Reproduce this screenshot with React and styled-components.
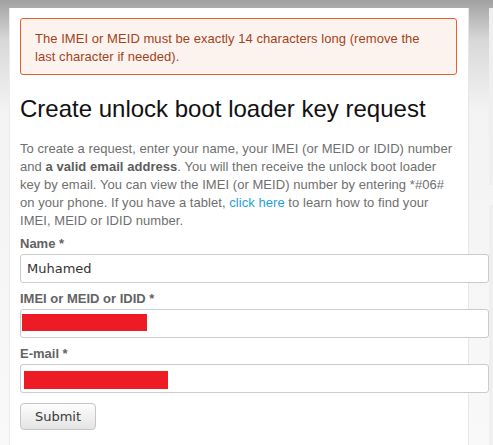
import styled, { createGlobalStyle } from 'styled-components'

const GlobalStyle = createGlobalStyle`
    html, body {
        margin: 0;
        padding: 0;
    }
    body {
        background: linear-gradient(#a1a1a1 0, #d8d8d8 40px, #f3f3f3 110px, #f9f9f9 100%);
        min-height: 445px;
        overflow: hidden;
        font-family: "Liberation Sans", Arial, sans-serif;
    }
`

function App() {
    return (
        <>
            <GlobalStyle />
            <Page>
                <Main>
                    <Alert>
                        The IMEI or MEID must be exactly 14 characters long (remove the
                        <br />
                        last character if needed).
                    </Alert>
                    <Title>Create unlock boot loader key request</Title>
                    <Intro>
                        To create a request, enter your name, your IMEI (or MEID or IDID) number
                        <br />
                        and <b>a valid email address</b>. You will then receive the unlock boot loader
                        <br />
                        key by email. You can view the IMEI (or MEID) number by entering *#06#
                        <br />
                        on your phone. If you have a tablet, <IntroLink href="#">click here</IntroLink> to
                        learn how to find your
                        <br />
                        IMEI, MEID or IDID number.
                    </Intro>
                    <Form onSubmit={(e) => e.preventDefault()}>
                        <Field>
                            <Label>Name *</Label>
                            <Input defaultValue='Muhamed' />
                        </Field>
                        <Field>
                            <Label>IMEI or MEID or IDID *</Label>
                            <InputWrap>
                                <Input defaultValue='' />
                                <Redaction $top={5} $left={2} $width={125} $height={17} />
                            </InputWrap>
                        </Field>
                        <Field>
                            <Label>E-mail *</Label>
                            <InputWrap>
                                <Input defaultValue='' />
                                <Redaction $top={7} $left={4} $width={144} $height={18} />
                            </InputWrap>
                        </Field>
                        <SubmitButton type='submit'>Submit</SubmitButton>
                    </Form>
                </Main>
                <Sidebar>
                    <SideBox $height={177} />
                    <SideBox $height={260} />
                </Sidebar>
            </Page>
        </>
    )
}

const Page = styled.div`
    display: flex;
    align-items: flex-start;
    padding-top: 8px;
    padding-left: 9px;
    gap: 20px;
    width: 520px;
`

const Main = styled.main`
    position: relative;
    z-index: 1;
    box-sizing: border-box;
    width: 460px;
    flex: none;
    min-height: 440px;
    background: #fff;
    border-left: 1px solid #ececec;
    border-right: 1px solid #e6e6e6;
    padding: 10px 11px 20px 10px;
`

const Alert = styled.div`
    border: 1px solid #e6602e;
    border-radius: 3px;
    background: #fdf3ee;
    color: #a3431b;
    font-size: 13px;
    line-height: 18px;
    letter-spacing: 0.05px;
    padding: 11px 14px 8px;
    white-space: nowrap;
`

const Title = styled.h1`
    margin: 20px 0 0;
    font-size: 24px;
    line-height: 28px;
    font-weight: 400;
    color: #111;
`

const Intro = styled.p`
    margin: 17px 0 0;
    font-size: 13px;
    line-height: 18px;
    letter-spacing: 0.05px;
    color: #6f6f6f;
    white-space: nowrap;

    b {
        color: #5c5c5c;
    }
`

const IntroLink = styled.a`
    color: #1ea0e0;
    text-decoration: none;
`

const Form = styled.form`
    display: flex;
    flex-direction: column;
    align-items: flex-start;
    margin-top: 5px;
    gap: 7px;
`

const Field = styled.div`
    display: flex;
    flex-direction: column;
    gap: 0;
`

const Label = styled.label`
    font-size: 13px;
    line-height: 18px;
    font-weight: 700;
    color: #636363;
    margin-bottom: 1px;
`

const InputWrap = styled.div`
    position: relative;
`

const Input = styled.input`
    box-sizing: border-box;
    width: 469px;
    height: 29px;
    margin: 0;
    border: 1px solid #cbcbcb;
    border-radius: 3px;
    padding: 0 6px;
    font-family: "DejaVu Sans", Verdana, sans-serif;
    font-size: 13px;
    color: #333;
    background: #fff;
    outline: none;
`

const Redaction = styled.span`
    position: absolute;
    top: ${(p) => p.$top}px;
    left: ${(p) => p.$left}px;
    width: ${(p) => p.$width}px;
    height: ${(p) => p.$height}px;
    background: #ed1c24;
`

const SubmitButton = styled.button`
    margin-top: 3px;
    box-sizing: border-box;
    width: 76px;
    height: 27px;
    padding: 0;
    border: 1px solid #c6c6c6;
    border-radius: 4px;
    background: linear-gradient(#fdfdfd, #e4e4e4);
    font-family: "DejaVu Sans", Verdana, sans-serif;
    font-size: 13px;
    color: #3a3a3a;
    cursor: pointer;
`

const Sidebar = styled.aside`
    display: flex;
    flex-direction: column;
    gap: 20px;
    width: 30px;
    flex: none;
`

const SideBox = styled.div`
    height: ${(p) => p.$height}px;
    background: #efefef;
`

export default App
